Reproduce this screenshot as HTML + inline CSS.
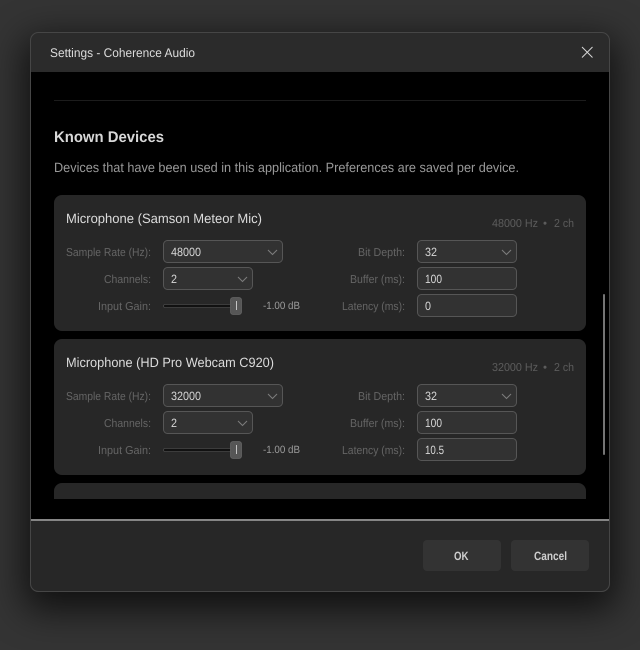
<!DOCTYPE html>
<html>
<head>
<meta charset="utf-8">
<style>
html,body{margin:0;padding:0;width:640px;height:650px;overflow:hidden;background:#343434}
#shadow{position:absolute;left:30px;top:32px;width:580px;height:560px;border-radius:8px;box-shadow:0 12px 36px 6px rgba(0,0,0,.68)}
svg{position:absolute;left:0;top:0}
text{font-family:"Liberation Sans",sans-serif;font-size:12px;text-rendering:geometricPrecision}
.lab{fill:#656565;font-size:11.5px}
.val{fill:#d8d8d8;font-size:12px}
.name{fill:#dcdcdc;font-size:13.5px}
.meta{fill:#5c5c5c;font-size:11.5px}
.ctl{fill:#323232;stroke:#565656;stroke-width:1}
.chev{fill:none;stroke:#7c7c7c;stroke-width:1.1}
</style>
</head>
<body>
<div id="shadow"></div>
<svg width="640" height="650" viewBox="0 0 640 650" xmlns="http://www.w3.org/2000/svg">
<defs>
<clipPath id="dlg"><rect x="30" y="32" width="580" height="560" rx="8"/></clipPath>
<g id="card">
<rect x="54" y="195" width="532" height="136" rx="8" fill="#272727"/>
<rect class="ctl" x="163.500" y="240.500" width="119" height="22" rx="4"/>
<path class="chev" d="M268 250l4.500 4.500 4.500-4.500"/>
<rect class="ctl" x="163.500" y="267.500" width="89" height="22" rx="4"/>
<path class="chev" d="M238 277l4.500 4.500 4.500-4.500"/>
<rect x="163.500" y="304.500" width="70" height="3" rx="1.500" fill="#111111" stroke="#484848" stroke-width=".8"/>
<rect x="230.500" y="297.500" width="11" height="17" rx="2.500" fill="#565656" stroke="#646464" stroke-width=".8"/>
<rect x="236" y="301" width="1" height="9" fill="#c4c4c4"/>
<rect class="ctl" x="417.500" y="240.500" width="99" height="22" rx="4"/>
<path class="chev" d="M502 250l4.500 4.500 4.500-4.500"/>
<rect class="ctl" x="417.500" y="267.500" width="99" height="22" rx="4"/>
<rect class="ctl" x="417.500" y="294.500" width="99" height="22" rx="4"/>
<text class="lab" x="66" y="256" textLength="85" lengthAdjust="spacingAndGlyphs">Sample Rate (Hz):</text>
<text class="lab" x="104" y="283" textLength="47" lengthAdjust="spacingAndGlyphs">Channels:</text>
<text class="lab" x="98" y="310" textLength="53" lengthAdjust="spacingAndGlyphs">Input Gain:</text>
<text class="lab" x="358" y="256" textLength="47" lengthAdjust="spacingAndGlyphs">Bit Depth:</text>
<text class="lab" x="350" y="283" textLength="55" lengthAdjust="spacingAndGlyphs">Buffer (ms):</text>
<text class="lab" x="342" y="310" textLength="63" lengthAdjust="spacingAndGlyphs">Latency (ms):</text>
<text x="263" y="309" fill="#9c9c9c" style="font-size:10.5px" textLength="37" lengthAdjust="spacingAndGlyphs">-1.00 dB</text>
<text class="val" x="171" y="283" textLength="6" lengthAdjust="spacingAndGlyphs">2</text>
<text class="val" x="425" y="256" textLength="12" lengthAdjust="spacingAndGlyphs">32</text>
<text class="val" x="425" y="283" textLength="17" lengthAdjust="spacingAndGlyphs">100</text>
</g>
</defs>
<g clip-path="url(#dlg)">
<rect x="30" y="32" width="580" height="40" fill="#2b2b2b"/>
<rect x="30" y="72" width="580" height="447" fill="#000000"/>
<rect x="30" y="521" width="580" height="71" fill="#272727"/>
<rect x="30" y="519" width="580" height="2" fill="#868686"/>
</g>
<rect x="30.500" y="32.500" width="579" height="559" rx="8" fill="none" stroke="#464646" stroke-width="1"/>

<text x="50" y="57" fill="#dcdcdc" style="font-size:12.5px" textLength="145" lengthAdjust="spacingAndGlyphs">Settings - Coherence Audio</text>
<path d="M582 47l10.500 10.500M592.500 47L582 57.500" stroke="#d6d6d6" stroke-width="1" fill="none"/>

<rect x="54" y="100" width="532" height="1" fill="#1c1c1c"/>
<text x="54" y="142" fill="#d8d8d8" style="font-size:15.5px;font-weight:bold" textLength="110" lengthAdjust="spacingAndGlyphs">Known Devices</text>
<text x="54" y="172" fill="#999999" style="font-size:13.5px" textLength="465" lengthAdjust="spacingAndGlyphs">Devices that have been used in this application. Preferences are saved per device.</text>

<use href="#card"/>
<text class="name" x="66" y="223" textLength="196" lengthAdjust="spacingAndGlyphs">Microphone (Samson Meteor Mic)</text>
<text class="meta" x="492" y="227" textLength="46" lengthAdjust="spacingAndGlyphs">48000 Hz</text>
<text class="meta" x="543" y="227">•</text>
<text class="meta" x="554" y="227" textLength="20" lengthAdjust="spacingAndGlyphs">2 ch</text>
<text class="val" x="171" y="256" textLength="30" lengthAdjust="spacingAndGlyphs">48000</text>
<text class="val" x="425" y="310" textLength="6" lengthAdjust="spacingAndGlyphs">0</text>

<use href="#card" y="144"/>
<text class="name" x="66" y="367" textLength="208" lengthAdjust="spacingAndGlyphs">Microphone (HD Pro Webcam C920)</text>
<text class="meta" x="492" y="371" textLength="46" lengthAdjust="spacingAndGlyphs">32000 Hz</text>
<text class="meta" x="543" y="371">•</text>
<text class="meta" x="554" y="371" textLength="20" lengthAdjust="spacingAndGlyphs">2 ch</text>
<text class="val" x="171" y="400" textLength="30" lengthAdjust="spacingAndGlyphs">32000</text>
<text class="val" x="425" y="454" textLength="19" lengthAdjust="spacingAndGlyphs">10.5</text>

<path d="M54 499v-8a8 8 0 0 1 8-8h516a8 8 0 0 1 8 8v8z" fill="#272727"/>

<rect x="603" y="294" width="2" height="161" rx="1" fill="#747474"/>

<rect x="423" y="540" width="78" height="31" rx="4" fill="#333333"/>
<rect x="511" y="540" width="78" height="31" rx="4" fill="#333333"/>
<text x="454" y="560" fill="#cfcfcf" style="font-size:12px;font-weight:bold" textLength="14.500" lengthAdjust="spacingAndGlyphs">OK</text>
<text x="534" y="560" fill="#cfcfcf" style="font-size:12px;font-weight:bold" textLength="33" lengthAdjust="spacingAndGlyphs">Cancel</text>
</svg>
</body>
</html>
